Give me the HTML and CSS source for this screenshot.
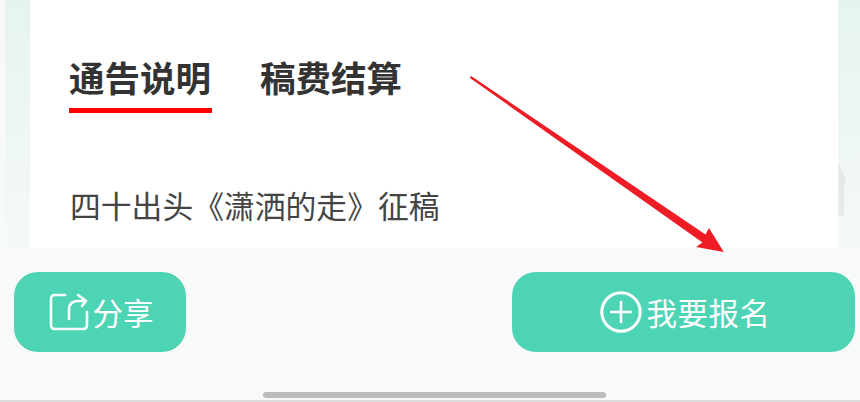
FILE: index.html
```html
<!DOCTYPE html>
<html lang="zh">
<head>
<meta charset="utf-8">
<title>通告说明</title>
<link rel="stylesheet" href="styles.css">
</head>
<body>
<div class="page">
  <div class="hero">
    <main class="card">
      <nav class="tabs">
        <span class="tab tab-active">通告说明</span>
        <span class="tab">稿费结算</span>
      </nav>
      <p class="desc">四十出头《潇洒的走》征稿</p>
    </main>
  </div>
  <footer class="actions">
    <button class="btn btn-share">
      <svg class="icon-share" viewBox="0 0 40 38" width="40" height="38" fill="none" stroke="#fff" stroke-width="2.6" stroke-linecap="round" stroke-linejoin="round">
        <path d="M16 2H6Q2 2 2 6V32Q2 36 6 36H34Q38 36 38 32V19"/>
        <path d="M20 26V17Q20 8 29 8H37"/>
        <path d="M29 2L37 8L33 13"/>
      </svg>
      <span>分享</span>
    </button>
    <button class="btn btn-join">
      <svg class="icon-plus" viewBox="0 0 42 42" width="42" height="42" fill="none" stroke="#fff">
        <circle cx="21" cy="21" r="19.2" stroke-width="3"/>
        <path d="M10 21H32M21 10V32" stroke-width="2.6"/>
      </svg>
      <span>我要报名</span>
    </button>
  </footer>
  <div class="home-area"><div class="home-bar"></div></div>
  <svg class="arrow" viewBox="0 0 860 402" width="860" height="402">
    <path fill="#e7e9e8" d="M838.500 162L846 180L844 187L844 216L838.500 216Z"/>
    <path fill="#ee1c25" d="M470 76.800L471.500 76.300L705.500 234.500L709 228L723.800 252L696 247L702.500 242.500L470 78Z"/>
  </svg>
</div>
</body>
</html>
```
FILE: styles.css
```css
* { box-sizing: border-box; }
html, body { margin: 0; padding: 0; }
body {
  width: 860px;
  height: 402px;
  overflow: hidden;
  font-family: "Noto Sans CJK SC", "Liberation Sans", sans-serif;
}
.page {
  position: relative;
  width: 860px;
  height: 402px;
  display: flex;
  flex-direction: column;
  background: #f8fafa;
  border-bottom: 2px solid #dcdcdc;
}
.hero {
  height: 248px;
  margin-left: 5px;
  padding: 0 22px 0 25px;
  background: linear-gradient(180deg, #e6f3f0 0%, #eff7f5 60%, #f6f9f9 100%);
}
.card {
  height: 248px;
  padding: 55px 0 0 39px;
  background: #fff;
}
.tabs {
  display: flex;
  gap: 48px;
  height: 58px;
}
.tab {
  width: 143px;
  height: 58px;
  font-size: 35.500px;
  line-height: 44px;
  font-weight: 700;
  color: #333;
  white-space: nowrap;
}
.tab-active { border-bottom: 5px solid #f00; }
.desc {
  margin: 70px 0 0 1px;
  font-size: 30.800px;
  line-height: 44px;
  color: #444;
  white-space: nowrap;
}
.actions {
  display: flex;
  justify-content: space-between;
  margin-top: 24px;
  padding: 0 5px 0 14px;
}
.btn {
  height: 80px;
  display: flex;
  align-items: center;
  justify-content: center;
  padding: 0;
  border: 0;
  border-radius: 24px;
  background: #4dd4b5;
  color: #fff;
  font-family: inherit;
  font-size: 30.500px;
  line-height: 40px;
}
.btn-share { width: 172px; padding-left: 2px; }
.btn-join { width: 343px; padding-left: 3px; font-size: 30.500px; letter-spacing: 0.500px; }
.icon-share { margin-right: 4px; }
.icon-plus { margin-right: 5px; }
.home-area {
  display: flex;
  justify-content: center;
  margin-top: 40px;
  padding-left: 9px;
}
.home-bar {
  width: 343px;
  height: 6px;
  border-radius: 3px;
  background: #bbb;
}
.arrow {
  position: absolute;
  left: 0;
  top: 0;
  pointer-events: none;
}
```
